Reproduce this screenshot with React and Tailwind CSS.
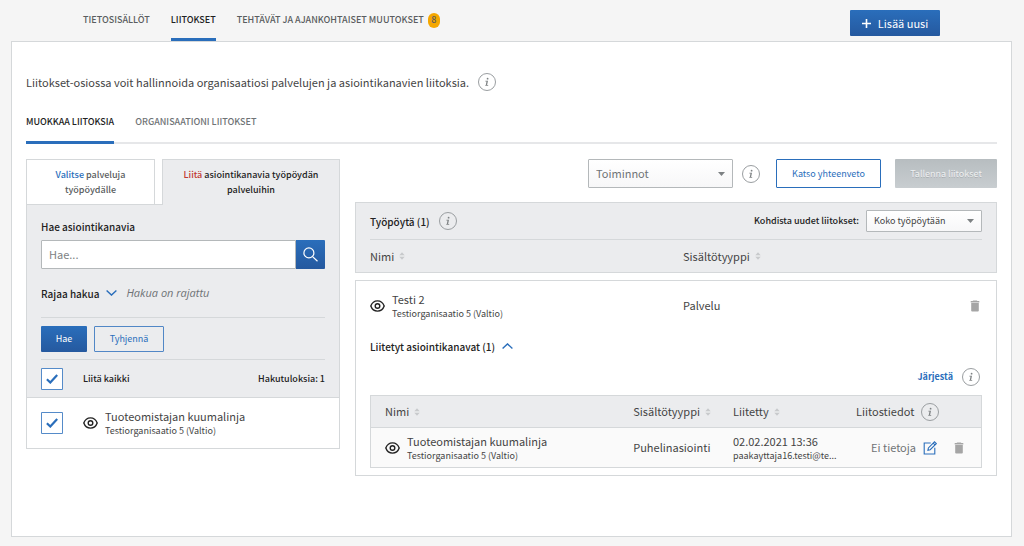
import { useState } from 'react';

const blueButton =
  'bg-gradient-to-b from-[#2a6ebb] to-[#25599f] text-white hover:from-[#2f78c9]';

function InfoButton({ label }) {
  return (
    <button
      type="button"
      aria-label={label}
      className="grid size-[18px] shrink-0 place-items-center rounded-full border border-[#9a9ea1] text-[#7d8183]"
    >
      <svg className="size-[10px]" viewBox="0 0 10 10" fill="currentColor">
        <circle cx="5.6" cy="1.7" r="0.9" />
        <path d="M3.4 3.7h2.600L5.100 7.900h1.200l-.2.8H3.200l.2-.8h.4l.7-3.400H3.300z" />
      </svg>
    </button>
  );
}

function EyeIcon() {
  return (
    <svg
      className="h-[12px] w-[15px] shrink-0 text-[#222]"
      viewBox="0 0 15 12"
      fill="none"
      stroke="currentColor"
      strokeWidth="1.4"
    >
      <path d="M.8 6C2 2.700 4.500.9 7.500.9S13 2.700 14.200 6c-1.200 3.300-3.700 5.100-6.700 5.100S2 9.300.8 6z" />
      <circle cx="7.500" cy="6" r="2.300" />
    </svg>
  );
}

function TrashButton({ label }) {
  return (
    <button type="button" aria-label={label} className="text-[#a5a5a5] hover:text-[#777]">
      <svg className="block h-[12px] w-[10px]" viewBox="0 0 10 12" fill="currentColor">
        <path d="M3.200.4h3.600l.6.700h1.900v1.500H.7V1.100h1.900z" />
        <path d="M1.200 2.900h7.600v7.500c0 .7-.5 1.200-1.200 1.200H2.400c-.7 0-1.200-.5-1.200-1.200z" />
      </svg>
    </button>
  );
}

function EditIcon() {
  return (
    <svg className="size-[14px]" viewBox="0 0 14 14" fill="none" stroke="currentColor" strokeWidth="1.100">
      <path d="M7.700 2H1.200v11h10.600V6.800" />
      <path d="M4.900 9.300l.5-2.400L11.500.8l1.800 1.800-6.100 6.100zM10.200 2.100L12 3.900" />
    </svg>
  );
}

function Chevron({ up }) {
  return (
    <svg className="h-[6px] w-[11px] text-[#2a6ebb]" viewBox="0 0 11 6" fill="none" stroke="currentColor" strokeWidth="1.400">
      <path d={up ? 'M.6 5.400L5.500.9l4.900 4.500' : 'M.6.6l4.900 4.500L10.400.6'} />
    </svg>
  );
}

function SortButton({ children }) {
  return (
    <button type="button" className="flex items-center gap-[5px]">
      {children}
      <svg className="h-[8px] w-[6px] text-[#c8cacc]" viewBox="0 0 6 8" fill="currentColor">
        <path d="M3 .3l2.700 3H.3zM3 7.700l2.700-3H.3z" />
      </svg>
    </button>
  );
}

function Checkbox({ label, defaultChecked }) {
  return (
    <span className="grid size-[22px] shrink-0">
      <input
        type="checkbox"
        aria-label={label}
        defaultChecked={defaultChecked}
        className="peer col-start-1 row-start-1 size-[22px] appearance-none rounded-[1px] border border-[#2a6ebb]/80 bg-white"
      />
      <svg
        className="pointer-events-none invisible col-start-1 row-start-1 h-[10px] w-[12px] self-center justify-self-center text-[#2a6ebb] peer-checked:visible"
        viewBox="0 0 12 10"
        fill="none"
        stroke="currentColor"
        strokeWidth="2.200"
      >
        <path d="M.9 5.200l3.400 3.300L11.200 1" />
      </svg>
    </span>
  );
}

function Dropdown({ id, label, options, className }) {
  return (
    <span className={`grid ${className}`}>
      <select
        id={id}
        aria-label={label}
        className="col-start-1 row-start-1 w-full appearance-none rounded-[1px] border border-[#b4b8ba] bg-gradient-to-b from-white to-[#f7f7f8] pr-5 pl-[7px]"
      >
        {options.map((option) => (
          <option key={option}>{option}</option>
        ))}
      </select>
      <svg
        className="pointer-events-none col-start-1 row-start-1 mr-2 h-[4px] w-[7px] self-center justify-self-end text-[#7d8183]"
        viewBox="0 0 7 4"
        fill="currentColor"
      >
        <path d="M0 0h7L3.500 4z" />
      </svg>
    </span>
  );
}

function NameCell({ name, organization }) {
  return (
    <div className="flex items-center gap-[7px]">
      <EyeIcon />
      <div>
        <div className="text-[11px] leading-[16px]">{name}</div>
        <div className="text-[9px] leading-[14px]">{organization}</div>
      </div>
    </div>
  );
}

function TopNav() {
  return (
    <header className="flex h-[41px] items-stretch justify-between pr-[84px] pl-[83px]">
      <nav className="flex gap-[21px] text-[9px] font-medium text-[#5a5d60]">
        <a href="#tietosisallot" className="flex items-center border-b-3 border-transparent pt-[2px]">
          TIETOSISÄLLÖT
        </a>
        <a href="#liitokset" className="flex items-center border-b-3 border-[#2a6ebb] pt-[2px] text-[#222]">
          LIITOKSET
        </a>
        <a href="#tehtavat" className="flex items-center gap-1 border-b-3 border-transparent pt-[2px]">
          TEHTÄVÄT JA AJANKOHTAISET MUUTOKSET
          <span className="grid h-[15px] w-[12px] place-items-center rounded-full bg-[#f5a700]">8</span>
        </a>
      </nav>
      <button
        type="button"
        className={`mt-[10px] flex h-[26px] w-[90px] items-center justify-center gap-[7px] rounded-[1px] text-[11px] ${blueButton}`}
      >
        <svg className="size-[9px]" viewBox="0 0 9 9" fill="none" stroke="currentColor" strokeWidth="1.600">
          <path d="M4.500 0v9M0 4.500h9" />
        </svg>
        Lisää uusi
      </button>
    </header>
  );
}

function SearchPanel() {
  const [query, setQuery] = useState('');

  return (
    <section>
      <div className="flex text-center text-[9px] leading-[15px] font-medium">
        <button type="button" className="h-[45px] w-[129px] border border-b-0 border-[#d5d8da] text-[#5a5d60]">
          <span className="text-[#2a6ebb]">Valitse</span> palveluja
          <br />
          työpöydälle
        </button>
        <div className="w-[7px]" />
        <button
          type="button"
          className="-mb-px h-[46px] flex-1 border border-b-0 border-[#d5d8da] bg-[#ebecee] pb-px text-[#222]"
        >
          <span className="text-[#c13832]">Liitä</span> asiointikanavia työpöydän
          <br />
          palveluihin
        </button>
      </div>
      <div className="border border-[#d5d8da]">
        <form className="bg-[#ebecee] px-[14px] pt-[14px]" onSubmit={(e) => e.preventDefault()}>
          <label htmlFor="search" className="block text-[10px] leading-[16px] font-medium text-[#222]">
            Hae asiointikanavia
          </label>
          <div className="mt-[5px] flex h-[29px]">
            <input
              id="search"
              value={query}
              onChange={(e) => setQuery(e.target.value)}
              placeholder="Hae..."
              className="min-w-0 flex-1 rounded-l-[1px] border border-[#b4b8ba] bg-white px-[7px] text-[11px] placeholder:text-[#7d8183]"
            />
            <button
              type="submit"
              aria-label="Etsi"
              className={`grid w-[29px] place-items-center rounded-r-[1px] ${blueButton}`}
            >
              <svg className="size-[15px]" viewBox="0 0 15 15" fill="none" stroke="currentColor" strokeWidth="1.200">
                <circle cx="5.900" cy="5.900" r="5" />
                <path d="M9.600 9.600l4.900 4.700" />
              </svg>
            </button>
          </div>
          <div className="mt-4 flex h-4 items-center text-[11px]">
            <button type="button" className="flex items-center gap-[7px] text-[10px] font-medium text-[#222]">
              Rajaa hakua
              <Chevron />
            </button>
            <em className="ml-[9px] font-['Open_Sans',sans-serif] text-[#6f7376]">Hakua on rajattu</em>
          </div>
          <div className="mt-4 flex gap-[7px] border-y border-[#d5d8da] pt-2 pb-[7px] text-[9px]">
            <button type="submit" className={`h-[26px] w-[46px] rounded-[1px] ${blueButton}`}>
              Hae
            </button>
            <button
              type="button"
              onClick={() => setQuery('')}
              className="h-[26px] w-[70px] rounded-[1px] border border-[#2a6ebb]/80 text-[#2a6ebb]"
            >
              Tyhjennä
            </button>
          </div>
          <div className="flex h-[37px] items-center text-[9px] font-medium text-[#222]">
            <Checkbox label="Liitä kaikki" defaultChecked />
            <span className="ml-5">Liitä kaikki</span>
            <span className="ml-auto">Hakutuloksia: 1</span>
          </div>
        </form>
        <div className="flex h-[51px] items-center gap-5 border-t border-[#d5d8da] px-[14px]">
          <Checkbox label="Tuoteomistajan kuumalinja" defaultChecked />
          <NameCell name="Tuoteomistajan kuumalinja" organization="Testiorganisaatio 5 (Valtio)" />
        </div>
      </div>
    </section>
  );
}

function ConnectionsTable() {
  return (
    <table className="w-full table-fixed border border-[#d5d8da] text-left text-[11px]">
      <colgroup>
        <col className="w-[43%]" />
        <col className="w-[16%]" />
        <col className="w-[19%]" />
        <col />
      </colgroup>
      <thead className="bg-[#ebecee]">
        <tr className="h-8 border-b border-[#d5d8da]">
          <th className="pl-[14px] font-normal">
            <SortButton>Nimi</SortButton>
          </th>
          <th className="font-normal">
            <SortButton>Sisältötyyppi</SortButton>
          </th>
          <th className="pl-[2px] font-normal">
            <SortButton>Liitetty</SortButton>
          </th>
          <th className="pl-[9px] font-normal">
            <div className="flex items-center gap-[7px]">
              Liitostiedot
              <InfoButton label="Tietoa liitostiedoista" />
            </div>
          </th>
        </tr>
      </thead>
      <tbody className="bg-[#fafafa]">
        <tr className="h-10">
          <td className="pl-[14px]">
            <NameCell name="Tuoteomistajan kuumalinja" organization="Testiorganisaatio 5 (Valtio)" />
          </td>
          <td>Puhelinasiointi</td>
          <td className="pl-[2px]">
            <div className="leading-[16px]">02.02.2021 13:36</div>
            <div className="text-[9px] leading-[14px]">paakayttaja16.testi@te...</div>
          </td>
          <td>
            <div className="flex items-center justify-end pr-[17px] text-[#6f7376]">
              Ei tietoja
              <button type="button" aria-label="Muokkaa" className="mr-[17px] ml-[7px] text-[#2a6ebb]">
                <EditIcon />
              </button>
              <TrashButton label="Poista liitos" />
            </div>
          </td>
        </tr>
      </tbody>
    </table>
  );
}

function Workspace() {
  return (
    <section className="min-w-0">
      <div className="flex h-[29px] items-center justify-end text-[9px]">
        <Dropdown label="Toiminnot" options={['Toiminnot']} className="h-[29px] w-[145px] text-[11px] text-[#6f7376]" />
        <div className="mr-4 ml-[9px]">
          <InfoButton label="Tietoa toiminnoista" />
        </div>
        <button type="button" className="h-full w-[105px] rounded-[1px] border border-[#2a6ebb] text-[#2a6ebb]">
          Katso yhteenveto
        </button>
        <button
          type="button"
          disabled
          className="ml-[14px] h-full w-[102px] rounded-[1px] bg-gradient-to-b from-[#b7bdc0] to-[#c8cdd0] text-[#eef0f1] text-shadow-2xs"
        >
          Tallenna liitokset
        </button>
      </div>

      <div className="mt-[14px] border border-[#d5d8da] bg-[#ebecee] px-[14px]">
        <div className="flex h-[37px] items-center border-b border-[#d5d8da]">
          <h2 className="mr-[9px] text-[10px] font-medium text-[#222]">Työpöytä (1)</h2>
          <InfoButton label="Tietoa työpöydästä" />
          <label htmlFor="target" className="mr-[7px] ml-auto text-[9px] font-medium text-[#222]">
            Kohdista uudet liitokset:
          </label>
          <Dropdown id="target" options={['Koko työpöytään']} className="h-[22px] w-[116px] text-[9px]" />
        </div>
        <div className="grid h-8 grid-cols-[313px_1fr] items-center text-[11px]">
          <SortButton>Nimi</SortButton>
          <SortButton>Sisältötyyppi</SortButton>
        </div>
      </div>

      <article className="mt-[7px] border border-[#d5d8da] px-[14px] pb-[7px]">
        <div className="grid h-[49px] grid-cols-[313px_1fr_auto] items-center pr-[2px] text-[11px]">
          <NameCell name="Testi 2" organization="Testiorganisaatio 5 (Valtio)" />
          <span>Palvelu</span>
          <TrashButton label="Poista palvelu" />
        </div>
        <button
          type="button"
          className="mt-2 flex h-4 items-center gap-[7px] text-[10px] font-medium text-[#222]"
        >
          Liitetyt asiointikanavat (1)
          <Chevron up />
        </button>
        <div className="mt-[14px] mb-[9px] flex items-center justify-end gap-[9px] pr-[2px]">
          <a href="#jarjesta" className="text-[9px] leading-[16px] font-bold text-[#2a6ebb]">
            Järjestä
          </a>
          <InfoButton label="Tietoa järjestämisestä" />
        </div>
        <ConnectionsTable />
      </article>
    </section>
  );
}

export default function App() {
  return (
    <div className="min-h-screen bg-[#f5f5f5] pb-[9px] font-['Noto_Sans_CJK_SC',sans-serif] text-[#444]" lang="fi">
      <TopNav />
      <main className="mr-3 ml-[11px] border border-[#d5d8da] bg-white px-[14px] pt-[31px] pb-[60px]">
        <div className="flex items-center gap-[9px] text-[11px] leading-[18px]">
          <p>Liitokset-osiossa voit hallinnoida organisaatiosi palvelujen ja asiointikanavien liitoksia.</p>
          <InfoButton label="Tietoa liitoksista" />
        </div>
        <nav className="mt-[9px] flex h-11 gap-[21px] border-b-2 border-[#e6e7e9] text-[9px] font-medium">
          <a href="#muokkaa" className="-mb-[2px] flex items-center border-b-3 border-[#2a6ebb] pt-[2px] text-[#222]">
            MUOKKAA LIITOKSIA
          </a>
          <a href="#organisaatio" className="flex items-center pt-[2px] text-[#6f7376]">
            ORGANISAATIONI LIITOKSET
          </a>
        </nav>
        <div className="mt-[15px] grid grid-cols-[314px_1fr] items-start gap-[15px]">
          <SearchPanel />
          <Workspace />
        </div>
      </main>
    </div>
  );
}
